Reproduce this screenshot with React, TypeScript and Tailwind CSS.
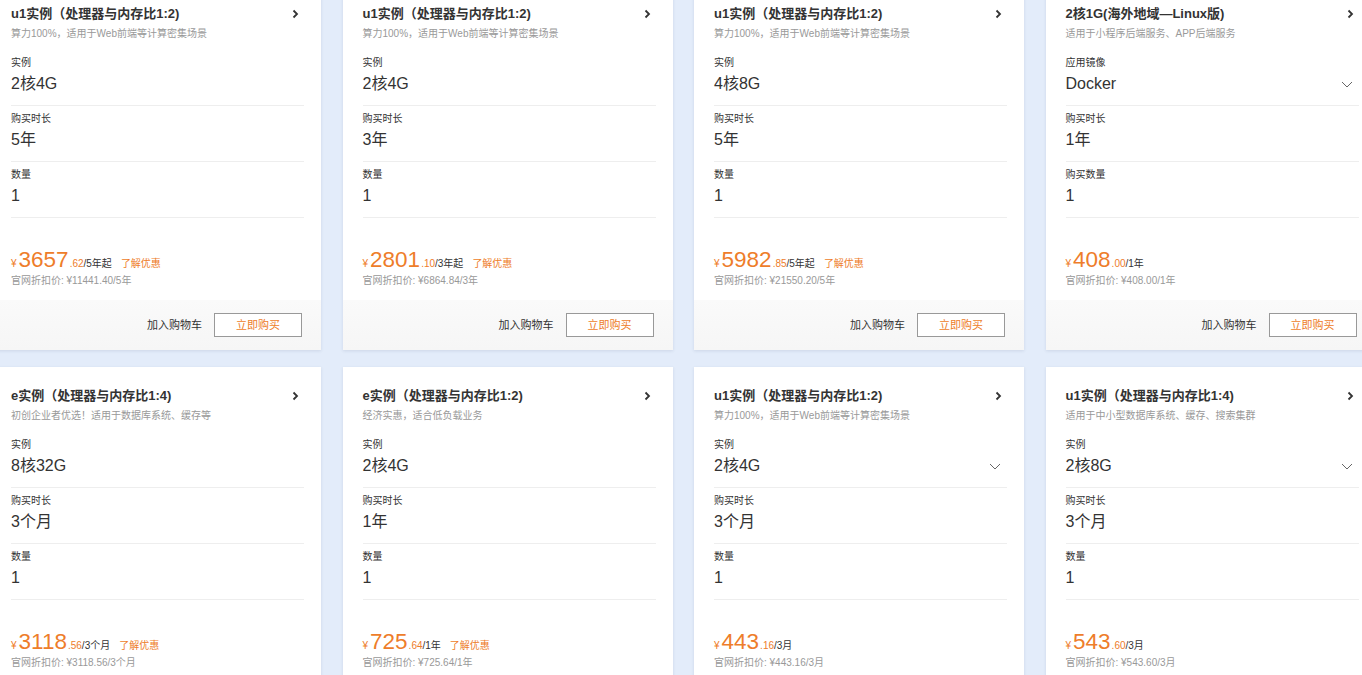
type Field = { label: string; value: string; select?: boolean };

interface Product {
  title: string;
  desc: string;
  fields: Field[];
  price: string;
  cents: string;
  unit: string;
  promo?: boolean;
  listPrice: string;
}

const products: Product[] = [
  {
    title: "u1实例（处理器与内存比1:2)",
    desc: "算力100%，适用于Web前端等计算密集场景",
    fields: [
      { label: "实例", value: "2核4G" },
      { label: "购买时长", value: "5年" },
      { label: "数量", value: "1" },
    ],
    price: "3657",
    cents: ".62",
    unit: "/5年起",
    promo: true,
    listPrice: "官网折扣价: ¥11441.40/5年",
  },
  {
    title: "u1实例（处理器与内存比1:2)",
    desc: "算力100%，适用于Web前端等计算密集场景",
    fields: [
      { label: "实例", value: "2核4G" },
      { label: "购买时长", value: "3年" },
      { label: "数量", value: "1" },
    ],
    price: "2801",
    cents: ".10",
    unit: "/3年起",
    promo: true,
    listPrice: "官网折扣价: ¥6864.84/3年",
  },
  {
    title: "u1实例（处理器与内存比1:2)",
    desc: "算力100%，适用于Web前端等计算密集场景",
    fields: [
      { label: "实例", value: "4核8G" },
      { label: "购买时长", value: "5年" },
      { label: "数量", value: "1" },
    ],
    price: "5982",
    cents: ".85",
    unit: "/5年起",
    promo: true,
    listPrice: "官网折扣价: ¥21550.20/5年",
  },
  {
    title: "2核1G(海外地域—Linux版)",
    desc: "适用于小程序后端服务、APP后端服务",
    fields: [
      { label: "应用镜像", value: "Docker", select: true },
      { label: "购买时长", value: "1年" },
      { label: "购买数量", value: "1" },
    ],
    price: "408",
    cents: ".00",
    unit: "/1年",
    listPrice: "官网折扣价: ¥408.00/1年",
  },
  {
    title: "e实例（处理器与内存比1:4)",
    desc: "初创企业者优选！适用于数据库系统、缓存等",
    fields: [
      { label: "实例", value: "8核32G" },
      { label: "购买时长", value: "3个月" },
      { label: "数量", value: "1" },
    ],
    price: "3118",
    cents: ".56",
    unit: "/3个月",
    promo: true,
    listPrice: "官网折扣价: ¥3118.56/3个月",
  },
  {
    title: "e实例（处理器与内存比1:2)",
    desc: "经济实惠，适合低负载业务",
    fields: [
      { label: "实例", value: "2核4G" },
      { label: "购买时长", value: "1年" },
      { label: "数量", value: "1" },
    ],
    price: "725",
    cents: ".64",
    unit: "/1年",
    promo: true,
    listPrice: "官网折扣价: ¥725.64/1年",
  },
  {
    title: "u1实例（处理器与内存比1:2)",
    desc: "算力100%，适用于Web前端等计算密集场景",
    fields: [
      { label: "实例", value: "2核4G", select: true },
      { label: "购买时长", value: "3个月" },
      { label: "数量", value: "1" },
    ],
    price: "443",
    cents: ".16",
    unit: "/3月",
    listPrice: "官网折扣价: ¥443.16/3月",
  },
  {
    title: "u1实例（处理器与内存比1:4)",
    desc: "适用于中小型数据库系统、缓存、搜索集群",
    fields: [
      { label: "实例", value: "2核8G", select: true },
      { label: "购买时长", value: "3个月" },
      { label: "数量", value: "1" },
    ],
    price: "543",
    cents: ".60",
    unit: "/3月",
    listPrice: "官网折扣价: ¥543.60/3月",
  },
];

function ChevronRight() {
  return (
    <svg width="7" height="10" viewBox="0 0 7 10" fill="none" className="mr-[5px]">
      <path d="M1.5 1.5L5 5L1.5 8.5" stroke="#333" strokeWidth="1.8" />
    </svg>
  );
}

function ChevronDown() {
  return (
    <svg width="12" height="7" viewBox="0 0 12 7" fill="none" className="mr-[6px]">
      <path d="M1 1L6 6L11 1" stroke="#666" strokeWidth="1" />
    </svg>
  );
}

function ProductCard({ p }: { p: Product }) {
  return (
    <div className="flex h-[365px] w-[330px] flex-col bg-white shadow-[0_1px_3px_rgba(40,60,100,0.12)]">
      <div className="pl-[20px] pr-[17px] pt-[20px]">
        <div className="flex h-[18px] items-center justify-between">
          <span className="text-[13px] font-bold leading-[18px] text-[#333]">{p.title}</span>
          <ChevronRight />
        </div>
        <div className="mt-[4px] h-[14px] text-[10px] leading-[14px] text-[#999]">{p.desc}</div>

        <div className="mt-[15px] flex flex-col gap-[6px]">
          {p.fields.map((f) => (
            <div key={f.label} className="border-b border-[#eeeeee] pb-[10px]">
              <div className="h-[14px] text-[10px] leading-[14px] text-[#333]">{f.label}</div>
              <div className="mt-[3px] flex h-[22px] items-center justify-between">
                <span className="text-[16px] leading-[22px] text-[#333]">{f.value}</span>
                {f.select ? <ChevronDown /> : null}
              </div>
            </div>
          ))}
        </div>

        <div className="mt-[28px] flex h-[28px] items-baseline leading-[28px]">
          <span className="mr-[2px] text-[10px] text-[#ee7d2a]">¥</span>
          <span className="text-[22.5px] text-[#ee7d2a]">{p.price}</span>
          <span className="ml-[1px] text-[10px] text-[#ee7d2a]">{p.cents}</span>
          <span className="text-[10px] text-[#333]">{p.unit}</span>
          {p.promo ? <span className="ml-[9px] text-[10px] text-[#ee7d2a]">了解优惠</span> : null}
        </div>
        <div className="h-[14px] text-[10px] leading-[14px] text-[#999]">{p.listPrice}</div>
      </div>

      <div className="mt-auto flex h-[50px] items-center justify-end gap-[12px] bg-linear-to-b from-[#fafafa] to-[#f6f6f6] pr-[19px]">
        <span className="text-[11px] text-[#333]">加入购物车</span>
        <button className="flex h-[24px] w-[88px] items-center justify-center border border-[#999] bg-white text-[11px] text-[#ee7d2a]">
          立即购买
        </button>
      </div>
    </div>
  );
}

export default function App() {
  return (
    <div className="h-screen w-screen overflow-hidden bg-[#e3ecfa] font-['Liberation_Sans','Noto_Sans_CJK_SC',sans-serif]">
      <div className="-ml-[9px] -mt-[15px] grid w-max grid-cols-[repeat(4,330px)] gap-x-[21.5px] gap-y-[17px]">
        {products.map((p, i) => (
          <ProductCard key={i} p={p} />
        ))}
      </div>
    </div>
  );
}
